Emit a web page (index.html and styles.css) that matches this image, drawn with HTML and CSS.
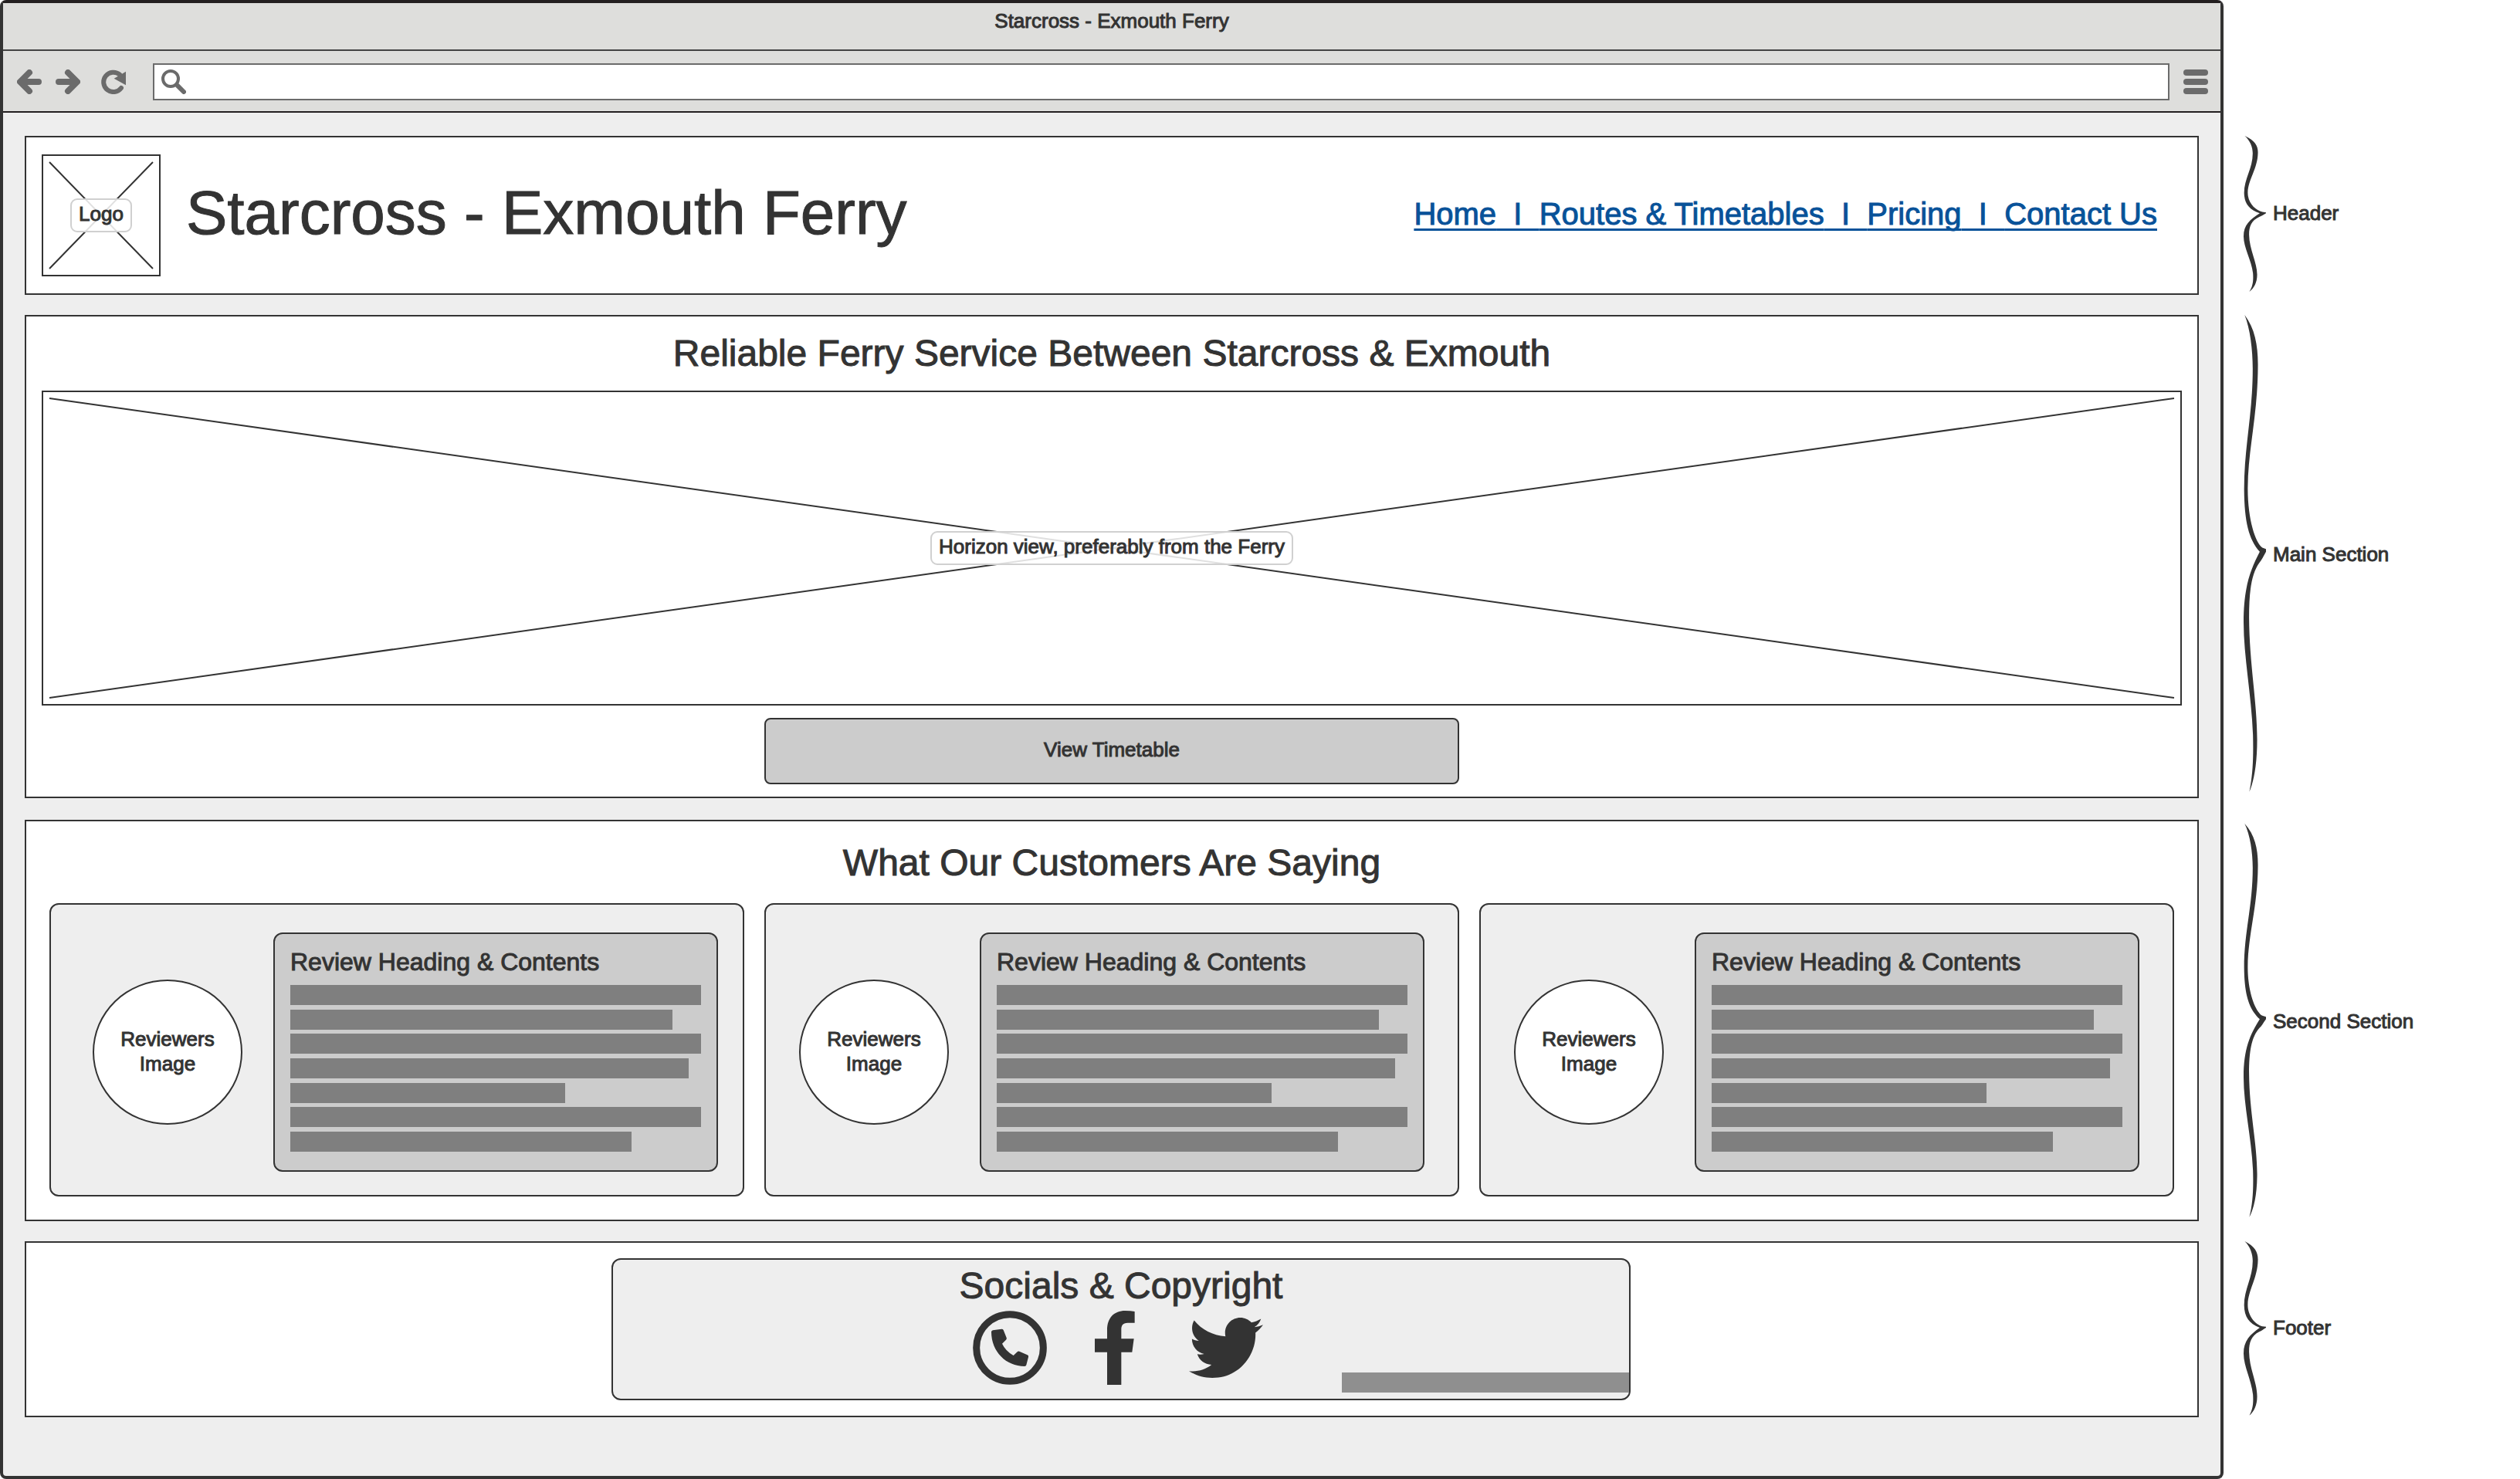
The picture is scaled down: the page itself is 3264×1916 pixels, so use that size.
FILE: index.html
```html
<!DOCTYPE html>
<html lang="en">
<head>
  <meta charset="utf-8">
  <title>Starcross - Exmouth Ferry</title>
  <meta name="viewport" content="width=device-width, initial-scale=1">
  <link rel="stylesheet" href="styles.css">
</head>
<body>
  <svg class="defs" aria-hidden="true">
    <symbol id="brace" viewBox="0 0 86 1381" preserveAspectRatio="none">
      <path d="M4 0C44 40 56 90 55 150C54 290 17 390 16 500C15 590 45 660 72 674L86 678V686C75 700 70 710 60 718C30 750 21 800 21 876C22 1010 52 1120 52 1230C52 1300 40 1350 22 1381C36 1330 38 1280 36 1216C30 1100 0 990 0 890C0 790 25 740 62 686C20 650 3 600 2 506C2 380 35 290 35 156C35 100 25 40 4 0Z"/>
    </symbol>
  </svg>

  <div class="page">
    <div class="window">
      <div class="titlebar">Starcross - Exmouth Ferry</div>
      <div class="toolbar">
        <button class="tool" aria-label="Back">
          <svg viewBox="0 0 96 96"><path class="arrow" d="M84 48H16M48 12L12 48L48 84"/></svg>
        </button>
        <button class="tool" aria-label="Forward">
          <svg viewBox="0 0 96 96"><path class="arrow" d="M12 48H80M48 12L84 48L48 84"/></svg>
        </button>
        <button class="tool tool-reload" aria-label="Reload">
          <svg viewBox="0 0 96 96"><path class="reload" d="M78 72A38 38 0 1 1 72 20"/><path class="solid" d="M96 8L50 35L96 61Z"/></svg>
        </button>
        <label class="address">
          <svg viewBox="0 0 96 96" aria-hidden="true"><circle class="lens" cx="36" cy="36" r="30"/><path class="handle" d="M62 62L87 87"/></svg>
          <input type="text" aria-label="Address">
        </label>
        <button class="tool" aria-label="Menu">
          <svg viewBox="0 0 96 96"><g class="solid"><rect width="96" height="24" rx="12"/><rect y="36" width="96" height="24" rx="12"/><rect y="72" width="96" height="24" rx="12"/></g></svg>
        </button>
      </div>

      <div class="content">
        <header class="panel site-header">
          <div class="picture logo">
            <svg class="cross" viewBox="0 0 100 100" preserveAspectRatio="none" aria-hidden="true"><path d="M0 0L100 100M100 0L0 100"/></svg>
            <span class="caption">Logo</span>
          </div>
          <h1>Starcross - Exmouth Ferry</h1>
          <nav><a href="#home">Home</a>  I  <a href="#routes">Routes &amp; Timetables</a>  I  <a href="#pricing">Pricing</a>  I  <a href="#contact">Contact Us</a></nav>
        </header>

        <main class="panel hero">
          <h2>Reliable Ferry Service Between Starcross &amp; Exmouth</h2>
          <div class="picture horizon">
            <svg class="cross" viewBox="0 0 100 100" preserveAspectRatio="none" aria-hidden="true"><path d="M0 0L100 100M100 0L0 100"/></svg>
            <span class="caption">Horizon view, preferably from the Ferry</span>
          </div>
          <button class="timetable">View Timetable</button>
        </main>

        <section class="panel reviews">
          <h2>What Our Customers Are Saying</h2>
          <div class="cards">
            <article class="card">
              <div class="avatar">Reviewers<br>Image</div>
              <div class="review">
                <h3>Review Heading &amp; Contents</h3>
                <div class="lines"><i class="full"></i><i class="long"></i><i class="full"></i><i class="wide"></i><i class="short"></i><i class="full"></i><i class="mid"></i></div>
              </div>
            </article>
            <article class="card">
              <div class="avatar">Reviewers<br>Image</div>
              <div class="review">
                <h3>Review Heading &amp; Contents</h3>
                <div class="lines"><i class="full"></i><i class="long"></i><i class="full"></i><i class="wide"></i><i class="short"></i><i class="full"></i><i class="mid"></i></div>
              </div>
            </article>
            <article class="card">
              <div class="avatar">Reviewers<br>Image</div>
              <div class="review">
                <h3>Review Heading &amp; Contents</h3>
                <div class="lines"><i class="full"></i><i class="long"></i><i class="full"></i><i class="wide"></i><i class="short"></i><i class="full"></i><i class="mid"></i></div>
              </div>
            </article>
          </div>
        </section>

        <footer class="panel site-footer">
          <div class="socials">
            <h2>Socials &amp; Copyright</h2>
            <div class="social-links">
              <a href="#phone" aria-label="Phone"><svg class="icon" viewBox="0 0 288 288"><circle class="ring" cx="144" cy="144" r="130"/><path d="M72 82Q73 77 78 76L112 71Q117 71 119 75L131 105Q133 110 129 113L114 128Q127 156 158 174L173 160Q176 156 181 158L212 172Q218 174 216 180L208 211Q207 216 201 216C130 216 72 160 72 82Z"/></svg></a>
              <a href="#facebook" aria-label="Facebook"><svg class="icon icon-narrow" viewBox="0 0 180 288"><path d="M155 3V47H128C108 47 103 58 103 73V109H152L145 161H103V288H48V161H0V109H48V75C48 28 75 0 118 0Q140 0 155 3Z"/></svg></a>
              <a href="#twitter" aria-label="Twitter"><svg class="icon" viewBox="0 0 512 512"><path d="M459.37 151.716c.325 4.548.325 9.097.325 13.645 0 138.72-105.583 298.558-298.558 298.558-59.452 0-114.68-17.219-161.137-47.106 8.447.974 16.568 1.299 25.34 1.299 49.055 0 94.213-16.568 130.274-44.832-46.132-.975-84.792-31.188-98.112-72.772 6.498.974 12.995 1.624 19.818 1.624 9.421 0 18.843-1.3 27.614-3.573-48.081-9.747-84.143-51.98-84.143-102.985v-1.299c13.969 7.797 30.214 12.67 47.431 13.319-28.264-18.843-46.781-51.005-46.781-87.391 0-19.492 5.197-37.36 14.294-52.954 51.655 63.675 129.3 105.258 216.365 109.807-1.624-7.797-2.599-15.918-2.599-24.04 0-57.828 46.782-104.934 104.934-104.934 30.213 0 57.502 12.67 76.67 33.137 23.715-4.548 46.456-13.32 66.599-25.34-7.798 24.366-24.366 44.833-46.132 57.827 21.117-2.273 41.584-8.122 60.426-16.243-14.292 20.791-32.161 39.308-52.628 54.253z"/></svg></a>
            </div>
            <span class="copyright"></span>
          </div>
        </footer>
      </div>
    </div>

    <aside class="notes">
      <div class="note note-header"><svg aria-hidden="true"><use href="#brace"/></svg><span>Header</span></div>
      <div class="note note-main"><svg aria-hidden="true"><use href="#brace"/></svg><span>Main Section</span></div>
      <div class="note note-second"><svg aria-hidden="true"><use href="#brace"/></svg><span>Second Section</span></div>
      <div class="note note-footer"><svg aria-hidden="true"><use href="#brace"/></svg><span>Footer</span></div>
    </aside>
  </div>
</body>
</html>
```

FILE: styles.css
```css
:root {
  --ink: #333333;
  --frame: #231f20;
  --icon: #6b6b6b;
  --chrome: #dededc;
  --paper: #eeeeee;
  --shade: #cccccc;
  --link: #085299;
}

* {
  box-sizing: border-box;
}

body {
  margin: 0;
  background: #ffffff;
  color: var(--ink);
  font: 26px/32px "Liberation Sans", Arial, sans-serif;
  -webkit-text-stroke: 1px currentColor;
}

svg {
  display: block;
}

h1,
h2,
h3 {
  margin: 0;
  font-weight: 400;
}

h1 {
  font-size: 80px;
  line-height: 96px;
}

h2 {
  font-size: 48px;
  line-height: 56px;
  text-align: center;
}

h3 {
  font-size: 32px;
  line-height: 40px;
}

button {
  border: 0;
  padding: 0;
  background: none;
  color: inherit;
  font: inherit;
}

.defs {
  position: absolute;
  width: 0;
  height: 0;
}

.page {
  display: grid;
  grid-template-columns: 1fr 384px;
  min-height: 100vh;
}

/* Browser window */

.window {
  display: flex;
  flex-direction: column;
  border: 4px solid var(--ink);
  border-top-color: var(--frame);
  border-radius: 8px;
  background: var(--paper);
}

.titlebar {
  height: 62px;
  padding-top: 7px;
  border-bottom: 2px solid #444444;
  background: var(--chrome);
  text-align: center;
}

.toolbar {
  display: flex;
  align-items: center;
  gap: 18px;
  padding: 16px 16px 14px 18px;
  border-bottom: 2px solid var(--frame);
  background: var(--chrome);
}

.tool,
.tool svg,
.address svg {
  flex: none;
  width: 32px;
  height: 32px;
}

.tool-reload {
  margin: 0 17px 0 9px;
}

.arrow,
.reload,
.lens,
.handle {
  fill: none;
  stroke: var(--icon);
  stroke-linecap: round;
  stroke-linejoin: round;
}

.arrow {
  stroke-width: 24px;
}

.reload {
  stroke-width: 18px;
}

.lens {
  stroke-width: 12px;
}

.handle {
  stroke-width: 18px;
}

.solid {
  fill: var(--icon);
}

.address {
  display: flex;
  flex: 1;
  align-items: center;
  gap: 12px;
  height: 48px;
  padding-left: 9px;
  border: 2px solid var(--icon);
  background: #ffffff;
}

.address input {
  flex: 1;
  min-width: 0;
  height: 40px;
  border: 0;
  outline: 0;
  background: none;
  color: inherit;
  font: inherit;
}

/* Page sections */

.content {
  display: flex;
  flex-direction: column;
  gap: 26px;
  padding: 30px 28px;
}

.panel {
  border: 2px solid var(--ink);
  background: #ffffff;
}

.picture {
  display: grid;
  place-items: center;
  padding: 8px;
  border: 2px solid var(--ink);
}

.picture > * {
  grid-area: 1 / 1;
}

.cross {
  width: 100%;
  height: 100%;
  min-height: 0;
  overflow: visible;
}

.cross path {
  fill: none;
  stroke: var(--ink);
  stroke-width: 2px;
  vector-effect: non-scaling-stroke;
}

.caption {
  z-index: 1;
  padding: 2px 9px 6px;
  border: 2px solid #d0d0d0;
  border-radius: 9px;
  background: rgb(255 255 255 / 85%);
}

.site-header {
  display: flex;
  align-items: center;
  padding: 22px 52px 22px 20px;
}

.logo {
  width: 154px;
  height: 158px;
}

.site-header h1 {
  margin-left: 33px;
  padding-bottom: 6px;
}

.site-header nav {
  margin-left: auto;
  padding-bottom: 4px;
  color: var(--link);
  font-size: 40px;
  line-height: 48px;
  white-space: pre;
  text-decoration: underline 3px;
  text-decoration-skip-ink: none;
  text-underline-offset: 5px;
}

.site-header a {
  color: inherit;
  text-decoration: none;
}

.hero {
  display: flex;
  flex-direction: column;
  align-items: center;
  margin-bottom: 2px;
  padding: 20px 20px 16px;
}

.horizon {
  align-self: stretch;
  height: 408px;
  margin: 20px 0 16px;
}

.timetable {
  width: 900px;
  max-width: 100%;
  height: 86px;
  padding-bottom: 4px;
  border: 2px solid var(--ink);
  border-radius: 8px;
  background: var(--shade);
}

.reviews {
  padding: 26px 30px 30px;
}

.cards {
  display: grid;
  grid-template-columns: repeat(3, 1fr);
  gap: 26px;
  margin-top: 24px;
}

.card {
  display: flex;
  align-items: center;
  justify-content: center;
  gap: 40px;
  padding: 36px 0 30px;
  border: 2px solid var(--ink);
  border-radius: 12px;
  background: var(--paper);
}

.card:first-child {
  padding-left: 22px;
}

.avatar {
  display: grid;
  flex: none;
  place-content: center;
  width: 194px;
  height: 188px;
  padding-bottom: 2px;
  border: 2px solid var(--ink);
  border-radius: 50%;
  background: #ffffff;
  text-align: center;
}

.review {
  flex: 0 1 576px;
  padding: 16px 20px 24px;
  border: 2px solid var(--ink);
  border-radius: 12px;
  background: var(--shade);
}

.lines {
  display: flex;
  flex-direction: column;
  justify-content: space-between;
  height: 216px;
  margin-top: 10px;
}

.lines i {
  height: 26px;
  background: #7f7f7f;
}

.full {
  width: 100%;
}

.wide {
  width: 97%;
}

.long {
  width: 93%;
}

.mid {
  width: 83%;
}

.short {
  width: 67%;
}

.site-footer {
  display: flex;
  justify-content: center;
  padding: 20px 0 20px 24px;
}

.socials {
  position: relative;
  width: 1320px;
  padding: 6px 0 18px;
  border: 2px solid var(--ink);
  border-radius: 12px;
  background: var(--paper);
}

.social-links {
  display: flex;
  justify-content: center;
  gap: 62px;
  margin-top: 4px;
  padding-right: 8px;
}

.icon {
  width: 96px;
  height: 96px;
  fill: var(--ink);
}

.icon-narrow {
  width: 60px;
}

.ring {
  fill: none;
  stroke: var(--ink);
  stroke-width: 27px;
}

.copyright {
  position: absolute;
  right: 0;
  bottom: 8px;
  width: 372px;
  height: 26px;
  background: #8f8f8f;
}

/* Margin notes */

.notes {
  display: flex;
  flex-direction: column;
  gap: 26px;
  padding: 176px 0 0 26px;
}

.note {
  display: flex;
  align-items: center;
  gap: 9px;
}

.note svg {
  align-self: flex-start;
  width: 29px;
  height: 99%;
  fill: var(--ink);
}

.note span {
  padding-bottom: 4px;
}

.note-header {
  height: 206px;
  padding-bottom: 2px;
}

.note-main {
  height: 628px;
  padding-bottom: 4px;
}

.note-second {
  height: 520px;
  padding-top: 5px;
}

.note-footer {
  height: 228px;
}
```
